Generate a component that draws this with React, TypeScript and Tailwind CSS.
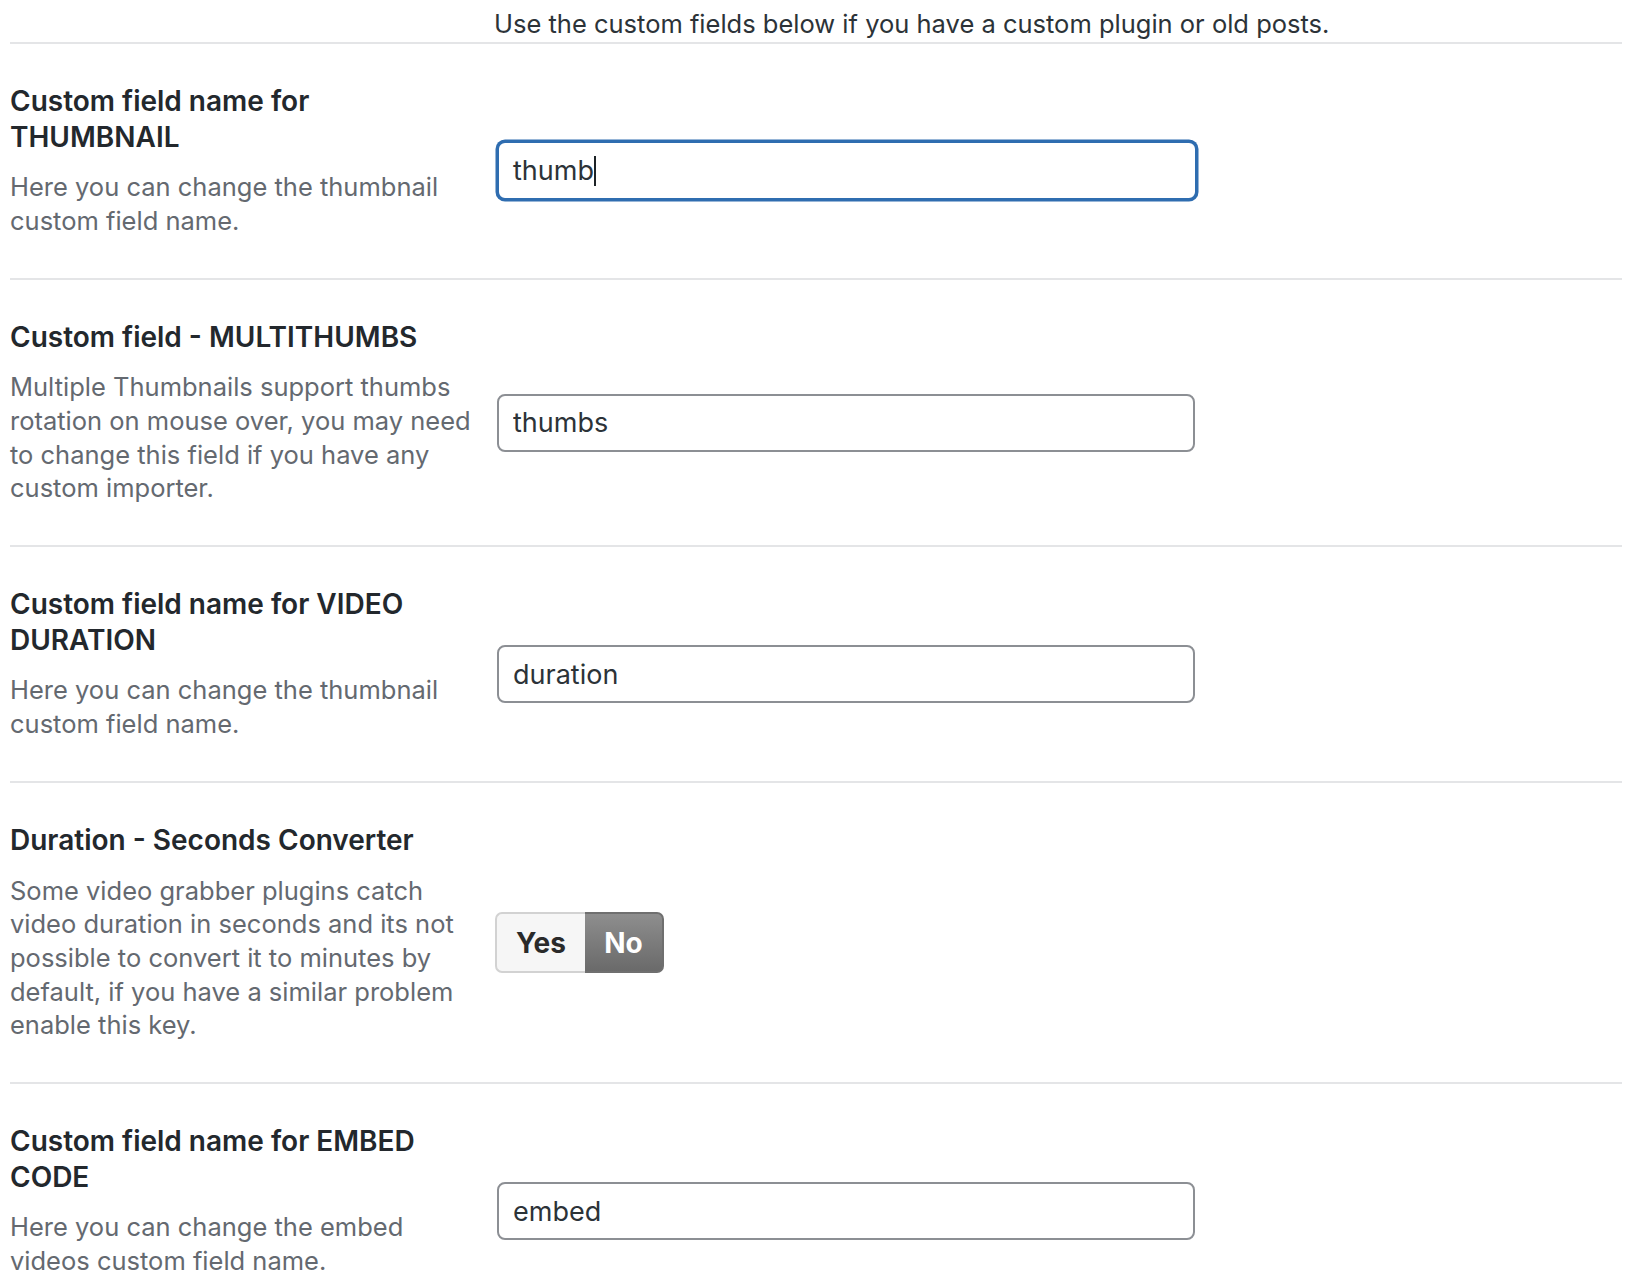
import React from "react";

type Field = {
  title: string;
  desc: string;
  value?: string;
  focused?: boolean;
  toggle?: boolean;
};

const fields: Field[] = [
  {
    title: "Custom field name for\nTHUMBNAIL",
    desc: "Here you can change the thumbnail custom field name.",
    value: "thumb",
    focused: true,
  },
  {
    title: "Custom field - MULTITHUMBS",
    desc: "Multiple Thumbnails support thumbs rotation on mouse over, you may need to change this field if you have any custom importer.",
    value: "thumbs",
  },
  {
    title: "Custom field name for VIDEO DURATION",
    desc: "Here you can change the thumbnail custom field name.",
    value: "duration",
  },
  {
    title: "Duration - Seconds Converter",
    desc: "Some video grabber plugins catch video duration in seconds and its not possible to convert it to minutes by default, if you have a similar problem enable this key.",
    toggle: true,
  },
  {
    title: "Custom field name for EMBED CODE",
    desc: "Here you can change the embed videos custom field name.",
    value: "embed",
  },
];

function TextInput({ value, focused }: { value: string; focused?: boolean }) {
  if (focused) {
    return (
      <div className="flex items-center w-[700px] h-[59px] px-[14px] rounded-[8px] border-2 border-[#2f6db0] shadow-[0_0_0_1.5px_#2f6db0] bg-white text-[27px] text-[#2c3338]">
        <span>{value}</span>
        <span className="w-[2px] h-[30px] bg-[#1d2327]" />
      </div>
    );
  }
  return (
    <input
      readOnly
      defaultValue={value}
      className="w-[698px] h-[58px] px-[14px] rounded-[8px] border-2 border-[#8c8f94] bg-white text-[27px] text-[#2c3338] outline-none"
    />
  );
}

function YesNo() {
  return (
    <div className="flex h-[61px] text-[28px] font-bold -ml-[2px]">
      <div className="w-[90px] flex items-center justify-center rounded-l-[7px] border-2 border-r-0 border-[#d2d2d2] bg-[#f6f6f6] text-[#2a2a2a]">
        Yes
      </div>
      <div className="w-[79px] flex items-center justify-center rounded-r-[7px] border-2 border-l-0 border-[#6f6f6f] bg-gradient-to-b from-[#8e8e8e] to-[#6a6a6a] text-white">
        No
      </div>
    </div>
  );
}

export default function App() {
  return (
    <div
      className="min-h-screen bg-white pl-[10px] pr-[24px]"
      style={{ fontFamily: "Inter, 'Noto Sans', sans-serif" }}
    >
      {/* intro row */}
      <div className="grid grid-cols-[484px_1fr] pt-[7px] pb-[2px]">
        <div />
        <p className="text-[25.5px] leading-[33px] text-[#2c3338]">
          Use the custom fields below if you have a custom plugin or old posts.
        </p>
      </div>

      {fields.map((f) => (
        <div
          key={f.title}
          className="grid grid-cols-[484px_1fr] border-t-2 border-[#e4e5e7]"
        >
          <div className="pt-[40px] pb-[40.3px] pr-[20px]">
            <h3 className="whitespace-pre-line text-[28px] leading-[35.5px] font-semibold text-[#23282d]">
              {f.title}
            </h3>
            <p className="mt-[15px] text-[25.5px] leading-[33.7px] text-[#646970]">
              {f.desc}
            </p>
          </div>
          <div className="flex items-center pt-[20px] pl-[3px]">
            {f.toggle ? <YesNo /> : <TextInput value={f.value ?? ""} focused={f.focused} />}
          </div>
        </div>
      ))}
    </div>
  );
}
